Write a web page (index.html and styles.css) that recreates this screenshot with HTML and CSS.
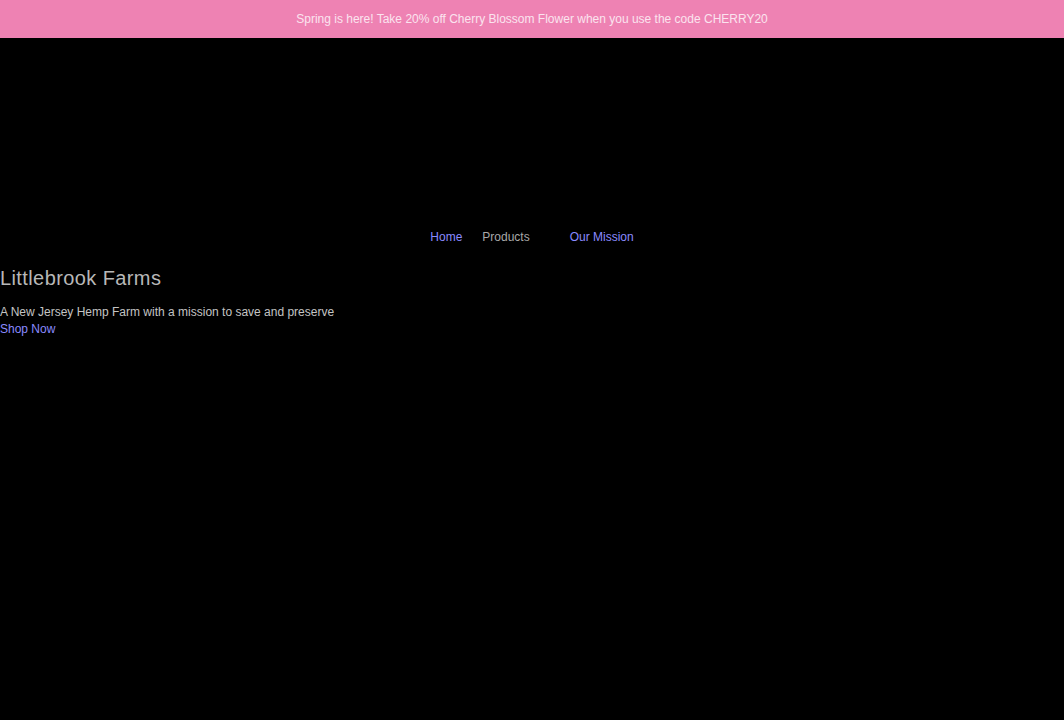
FILE: index.html
```html
<!DOCTYPE html>
<html lang="en">
<head>
    <meta charset="UTF-8">
    <meta name="viewport" content="width=device-width, initial-scale=1.0">
    <title>Littlebrook Farms</title>
    <link rel="stylesheet" href="styles.css">
</head>
<body>
    <div class="announcement">
      Spring is here! Take 20% off Cherry Blossom Flower when you use the code CHERRY20
    </div>

    <header class="site-header">
      <nav class="main-nav">
        <a href="#" class="nav-link">Home</a>
        <span class="nav-link nav-dropdown">Products</span>
        <a href="#" class="nav-link">Our Mission</a>
      </nav>
    </header>

    <section class="hero">
      <h1 class="hero-title">Littlebrook Farms</h1>
      <p class="hero-text">A New Jersey Hemp Farm with a mission to save and preserve</p>
      <a href="#" class="hero-link">Shop Now</a>
    </section>
</body>
</html>
```

FILE: styles.css
```css
body {
  margin: 0;
  padding: 0;
  background-color: #000;
  color: #c8c8c8;
  font-family: "Liberation Sans", Arial, sans-serif;
  min-height: 720px;
}
.announcement {
  height: 38px;
  line-height: 38px;
  background-color: #ee82b3;
  color: #fbe4ef;
  font-size: 12px;
  text-align: center;
}
.site-header {
  padding-top: 192px;
}
.main-nav {
  display: flex;
  justify-content: center;
  gap: 20px;
  font-size: 12px;
}
.nav-link {
  color: #8a8aff;
  text-decoration: none;
}
.nav-dropdown {
  color: #a8a8a8;
  padding-right: 20px;
}
.hero {
  padding-top: 23px;
}
.hero-title {
  margin: 0;
  font-size: 20px;
  font-weight: normal;
  color: #b8b8b8;
  letter-spacing: 0.4px;
}
.hero-text {
  margin: 15px 0 0;
  font-size: 12px;
  color: #c4c4c4;
}
.hero-link {
  display: block;
  margin-top: 3px;
  font-size: 12px;
  color: #8a8aff;
  text-decoration: none;
}
```
